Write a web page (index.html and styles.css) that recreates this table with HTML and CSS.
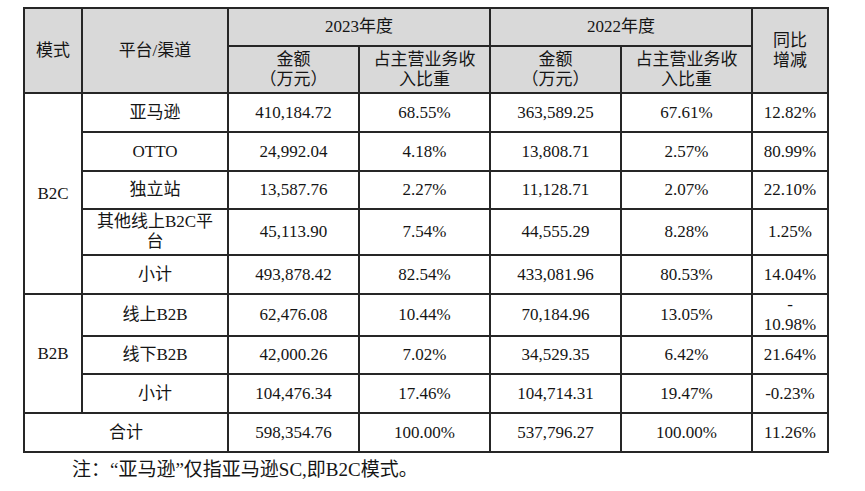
FILE: index.html
```html
<!DOCTYPE html>
<html lang="zh-CN">
<head>
<meta charset="utf-8">
<link rel="stylesheet" href="styles.css">
</head>
<body>
<div class="page">
<table class="data">
  <colgroup>
    <col class="c-mode">
    <col class="c-plat">
    <col class="c-num">
    <col class="c-num">
    <col class="c-num">
    <col class="c-num">
    <col class="c-yoy">
  </colgroup>
  <thead>
    <tr class="h1">
      <th rowspan="2">模式</th>
      <th rowspan="2">平台/渠道</th>
      <th colspan="2">2023年度</th>
      <th colspan="2">2022年度</th>
      <th rowspan="2">同比<br>增减</th>
    </tr>
    <tr class="h2">
      <th>金额<br>（万元）</th>
      <th>占主营业务收<br>入比重</th>
      <th>金额<br>（万元）</th>
      <th>占主营业务收<br>入比重</th>
    </tr>
  </thead>
  <tbody>
    <tr class="r39">
      <td rowspan="5">B2C</td>
      <td>亚马逊</td><td>410,184.72</td><td>68.55%</td><td>363,589.25</td><td>67.61%</td><td>12.82%</td>
    </tr>
    <tr class="r39">
      <td>OTTO</td><td>24,992.04</td><td>4.18%</td><td>13,808.71</td><td>2.57%</td><td>80.99%</td>
    </tr>
    <tr class="r38">
      <td>独立站</td><td>13,587.76</td><td>2.27%</td><td>11,128.71</td><td>2.07%</td><td>22.10%</td>
    </tr>
    <tr class="r46">
      <td>其他线上B2C平<br>台</td><td>45,113.90</td><td>7.54%</td><td>44,555.29</td><td>8.28%</td><td>1.25%</td>
    </tr>
    <tr class="r39">
      <td>小计</td><td>493,878.42</td><td>82.54%</td><td>433,081.96</td><td>80.53%</td><td>14.04%</td>
    </tr>
    <tr class="r41">
      <td rowspan="3">B2B</td>
      <td>线上B2B</td><td>62,476.08</td><td>10.44%</td><td>70,184.96</td><td>13.05%</td><td>-<br>10.98%</td>
    </tr>
    <tr class="r38">
      <td>线下B2B</td><td>42,000.26</td><td>7.02%</td><td>34,529.35</td><td>6.42%</td><td>21.64%</td>
    </tr>
    <tr class="r39">
      <td>小计</td><td>104,476.34</td><td>17.46%</td><td>104,714.31</td><td>19.47%</td><td>-0.23%</td>
    </tr>
    <tr class="r39">
      <td colspan="2">合计</td><td>598,354.76</td><td>100.00%</td><td>537,796.27</td><td>100.00%</td><td>11.26%</td>
    </tr>
  </tbody>
</table>
<p class="note">注：“亚马逊”仅指亚马逊SC,即B2C模式。</p>
</div>
</body>
</html>
```

FILE: styles.css
```css
html, body {
  margin: 0;
  padding: 0;
  background: #ffffff;
}
.page {
  padding: 7px 0 0 23px;
  font-family: "Liberation Serif", "Noto Sans CJK SC", serif;
  color: #151515;
  font-size: 17px;
}
.data {
  border-collapse: collapse;
  table-layout: fixed;
  width: 806px;
  border: 2px solid #262626;
}
.c-mode { width: 58px; }
.c-plat { width: 146px; }
.c-num { width: 131px; }
.c-yoy { width: 76px; }
.data th, .data td {
  border: 2px solid #262626;
  padding: 0;
  text-align: center;
  vertical-align: middle;
  line-height: 20px;
  font-weight: normal;
}
.data th {
  background: #d9d9d9;
}
.h1 { height: 38px; }
.h2 { height: 47px; }
.r38 { height: 38px; }
.r39 { height: 39px; }
.r41 { height: 41px; }
.r46 { height: 46px; }
.note {
  margin: 6px 0 0 0;
  padding-left: 49px;
  font-size: 19px;
  line-height: 22px;
}
```
